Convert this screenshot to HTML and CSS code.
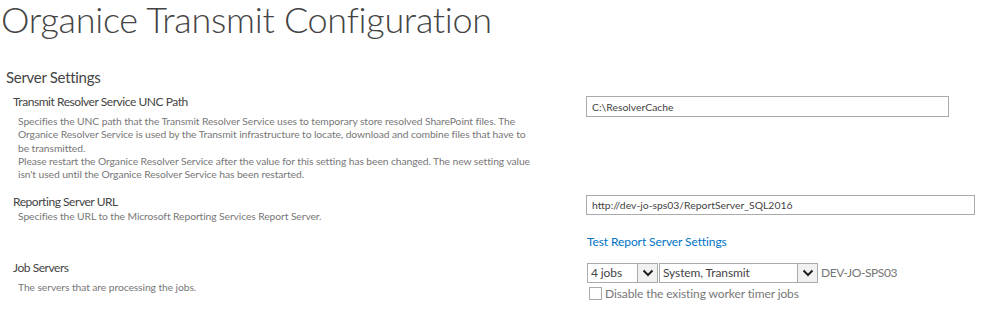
FILE: index.html
```html
<!DOCTYPE html>
<html>
<head>
<meta charset="utf-8">
<link rel="stylesheet" href="styles.css">
</head>
<body>
<div class="page">
  <h1 class="title">Organice Transmit Configuration</h1>
  <h2 class="section">Server Settings</h2>
  <div class="grid">
    <div class="left row-a">
      <div class="label">Transmit Resolver Service UNC Path</div>
      <div class="desc">Specifies the UNC path that the Transmit Resolver Service uses to temporary store resolved SharePoint files. The<br>Organice Resolver Service is used by the Transmit infrastructure to locate, download and combine files that have to<br>be transmitted.<br>Please restart the Organice Resolver Service after the value for this setting has been changed. The new setting value<br>isn't used until the Organice Resolver Service has been restarted.</div>
    </div>
    <div class="right row-a">
      <input class="text in-a" type="text" value="C:\ResolverCache">
    </div>

    <div class="left row-b">
      <div class="label">Reporting Server URL</div>
      <div class="desc">Specifies the URL to the Microsoft Reporting Services Report Server.</div>
    </div>
    <div class="right row-b">
      <input class="text in-b" type="text" value="http://dev-jo-sps03/ReportServer_SQL2016">
      <a class="link" href="#">Test Report Server Settings</a>
    </div>

    <div class="left row-c">
      <div class="label">Job Servers</div>
      <div class="desc">The servers that are processing the jobs.</div>
    </div>
    <div class="right row-c">
      <div class="selects">
        <div class="select sel-jobs"><span class="sel-text">4 jobs</span><span class="sel-btn"><svg width="12" height="8" viewBox="0 0 12 8"><path d="M1.5 1.5 L6 6 L10.5 1.5" fill="none" stroke="#222" stroke-width="2"/></svg></span></div>
        <div class="select sel-role"><span class="sel-text">System, Transmit</span><span class="sel-btn"><svg width="12" height="8" viewBox="0 0 12 8"><path d="M1.5 1.5 L6 6 L10.5 1.5" fill="none" stroke="#222" stroke-width="2"/></svg></span></div>
        <span class="server">DEV-JO-SPS03</span>
      </div>
      <label class="check"><input type="checkbox" class="cb"><span>Disable the existing worker timer jobs</span></label>
    </div>
  </div>
</div>
</body>
</html>
```
FILE: styles.css
```css
html, body {
  margin: 0;
  padding: 0;
  background: #fff;
}
body {
  font-family: Lato, "Open Sans", sans-serif;
  color: #444;
}
.page {
  width: 981px;
}
.title {
  margin: 0;
  padding-left: 1px;
  font-size: 36px;
  font-weight: 300;
  line-height: 38px;
  letter-spacing: -0.3px;
  color: #444;
}
.section {
  margin: 29px 0 0 6px;
  font-size: 15px;
  font-weight: 400;
  line-height: 20px;
  letter-spacing: -0.3px;
  color: #444;
}
.grid {
  display: grid;
  grid-template-columns: 586px 1fr;
  margin-top: 7px;
}
.left {
  padding-left: 13px;
}
.row-b { margin-top: 12px; }
.row-c { margin-top: 10px; }
.label {
  font-size: 12px;
  line-height: 16px;
  letter-spacing: -0.45px;
  color: #444;
}
.desc {
  padding-left: 5px;
  width: 560px;
  font-size: 10.3px;
  line-height: 13.33px;
  letter-spacing: -0.08px;
  color: #777;
}
.row-a .desc { margin-top: 5px; }
.row-b .desc { margin-top: 0; }
.row-c .desc { margin-top: 5px; }
.right {
  display: flex;
  flex-direction: column;
  align-items: flex-start;
}
.text {
  box-sizing: border-box;
  padding: 0 5px;
  border: 1px solid #ababab;
  font-family: inherit;
  font-size: 10.4px;
  color: #444;
  outline: none;
}
.in-a { width: 363px; height: 21px; margin: 2px 0 0 0; }
.in-b { width: 389px; height: 20px; margin: 1px 0 0 0; }
.link {
  margin-top: 19px;
  margin-left: 1px;
  font-size: 12px;
  line-height: 16px;
  letter-spacing: -0.1px;
  color: #0072c6;
  text-decoration: none;
}
.selects {
  display: flex;
  align-items: center;
  margin-top: 3px;
  margin-left: 1px;
}
.select {
  box-sizing: border-box;
  display: flex;
  height: 20px;
  border: 1px solid #ababab;
  background: #fff;
  margin-right: 1px;
}
.sel-jobs { width: 71px; }
.sel-role { width: 159px; }
.sel-text {
  flex: 1;
  padding-left: 3px;
  font-size: 12px;
  line-height: 18px;
  letter-spacing: -0.1px;
  color: #444;
}
.sel-btn {
  box-sizing: border-box;
  width: 20px;
  height: 18px;
  border-left: 1px solid #ababab;
  background: #f1f1f1;
  display: flex;
  align-items: center;
  justify-content: center;
}
.server {
  margin-left: 2px;
  font-size: 12px;
  letter-spacing: -0.4px;
  color: #777;
}
.check {
  display: flex;
  align-items: center;
  margin-top: 3px;
  margin-left: 3px;
  font-size: 12px;
  line-height: 16px;
  letter-spacing: -0.1px;
  color: #777;
}
.cb {
  appearance: none;
  box-sizing: border-box;
  width: 13px;
  height: 13px;
  margin: 0 3px 0 0;
  border: 1px solid #ababab;
  background: #fff;
}
```
